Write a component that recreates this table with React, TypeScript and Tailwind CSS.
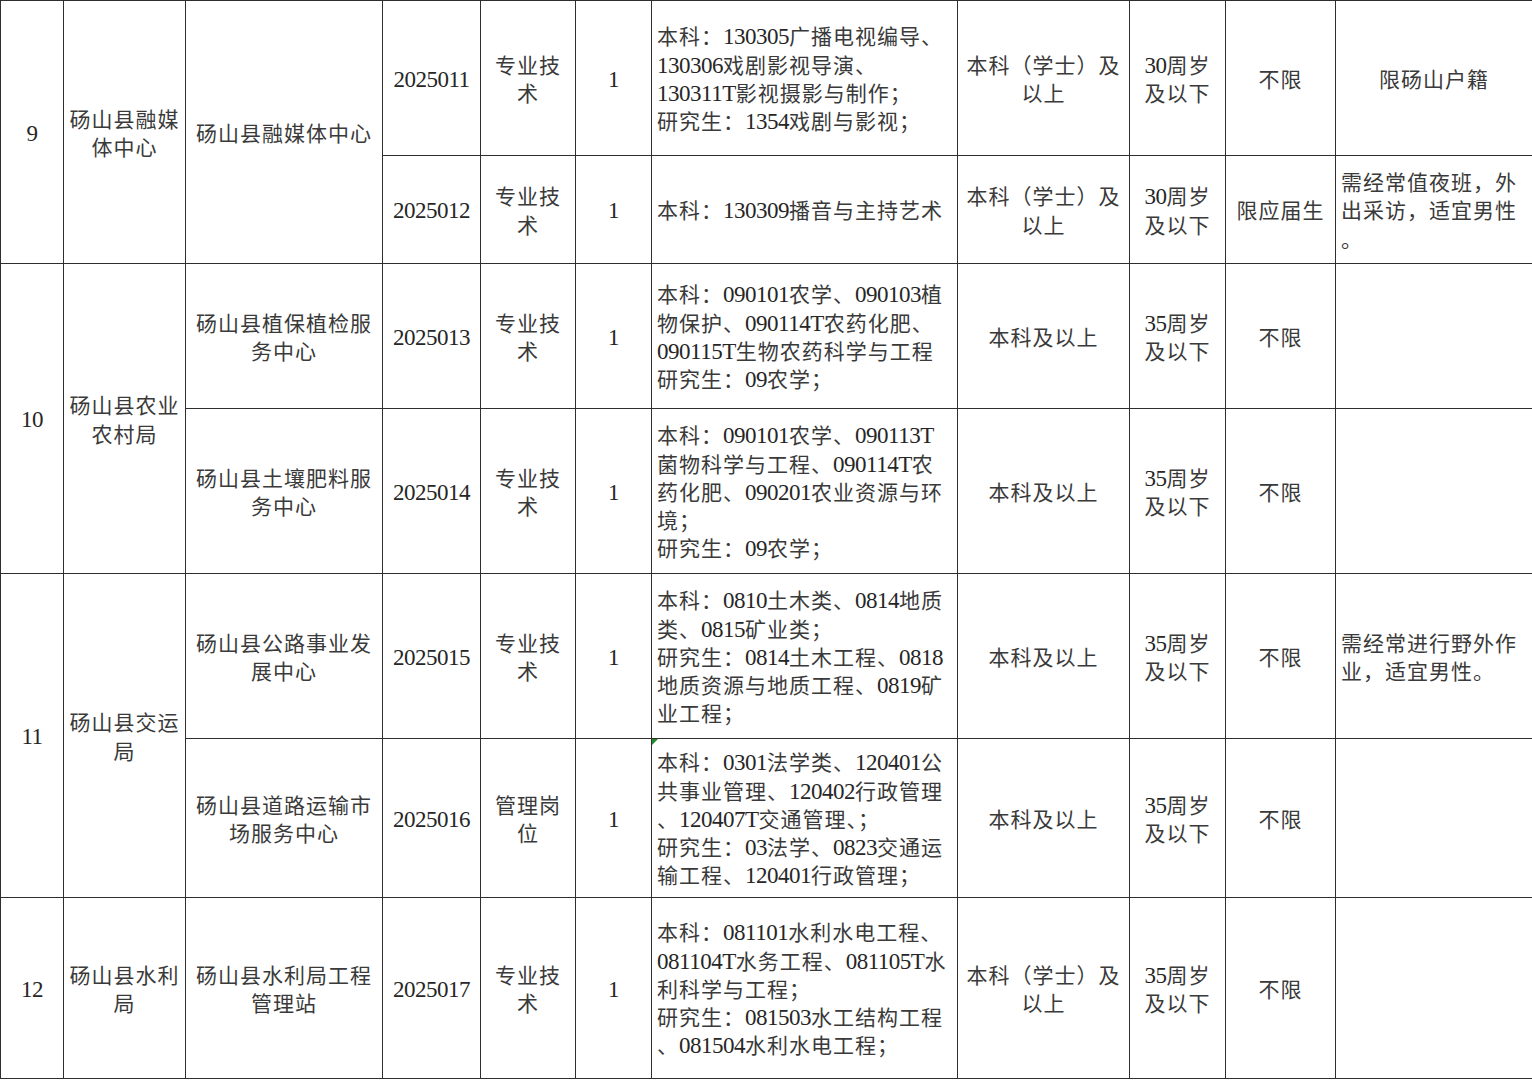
import type { ReactNode } from "react";

// one physical line per entry, the reference wraps at fixed spots
type Lines = string[];

interface Post {
  agency: Lines;
  code: string;
  kind: Lines;
  count: string;
  major: Lines;
  degree: Lines;
  age: Lines;
  other: Lines;
  remark: Lines;
  remarkAlign?: "left" | "center";
  height: string; // tr height class
  flag?: boolean; // green corner mark in the major cell
}

interface Group {
  no: string;
  dept: Lines;
  posts: Post[];
}

const groups: Group[] = [
  {
    no: "9",
    dept: ["砀山县融媒", "体中心"],
    posts: [
      {
        agency: ["砀山县融媒体中心"],
        code: "2025011",
        kind: ["专业技", "术"],
        count: "1",
        major: ["本科：130305广播电视编导、", "130306戏剧影视导演、", "130311T影视摄影与制作；", "研究生：1354戏剧与影视；"],
        degree: ["本科（学士）及", "以上"],
        age: ["30周岁", "及以下"],
        other: ["不限"],
        remark: ["限砀山户籍"],
        height: "h-[155px]",
      },
      {
        agency: [],
        code: "2025012",
        kind: ["专业技", "术"],
        count: "1",
        major: ["本科：130309播音与主持艺术"],
        degree: ["本科（学士）及", "以上"],
        age: ["30周岁", "及以下"],
        other: ["限应届生"],
        remark: ["需经常值夜班，外", "出采访，适宜男性", "。"],
        remarkAlign: "left",
        height: "h-[108px]",
      },
    ],
  },
  {
    no: "10",
    dept: ["砀山县农业", "农村局"],
    posts: [
      {
        agency: ["砀山县植保植检服", "务中心"],
        code: "2025013",
        kind: ["专业技", "术"],
        count: "1",
        major: ["本科：090101农学、090103植", "物保护、090114T农药化肥、", "090115T生物农药科学与工程", "研究生：09农学；"],
        degree: ["本科及以上"],
        age: ["35周岁", "及以下"],
        other: ["不限"],
        remark: [],
        height: "h-[145px]",
      },
      {
        agency: ["砀山县土壤肥料服", "务中心"],
        code: "2025014",
        kind: ["专业技", "术"],
        count: "1",
        major: ["本科：090101农学、090113T", "菌物科学与工程、090114T农", "药化肥、090201农业资源与环", "境；", "研究生：09农学；"],
        degree: ["本科及以上"],
        age: ["35周岁", "及以下"],
        other: ["不限"],
        remark: [],
        height: "h-[165px]",
      },
    ],
  },
  {
    no: "11",
    dept: ["砀山县交运", "局"],
    posts: [
      {
        agency: ["砀山县公路事业发", "展中心"],
        code: "2025015",
        kind: ["专业技", "术"],
        count: "1",
        major: ["本科：0810土木类、0814地质", "类、0815矿业类；", "研究生：0814土木工程、0818", "地质资源与地质工程、0819矿", "业工程；"],
        degree: ["本科及以上"],
        age: ["35周岁", "及以下"],
        other: ["不限"],
        remark: ["需经常进行野外作", "业，适宜男性。"],
        remarkAlign: "left",
        height: "h-[165px]",
      },
      {
        agency: ["砀山县道路运输市", "场服务中心"],
        code: "2025016",
        kind: ["管理岗", "位"],
        count: "1",
        major: ["本科：0301法学类、120401公", "共事业管理、120402行政管理", "、120407T交通管理、；", "研究生：03法学、0823交通运", "输工程、120401行政管理；"],
        degree: ["本科及以上"],
        age: ["35周岁", "及以下"],
        other: ["不限"],
        remark: [],
        height: "h-[159px]",
        flag: true,
      },
    ],
  },
  {
    no: "12",
    dept: ["砀山县水利", "局"],
    posts: [
      {
        agency: ["砀山县水利局工程", "管理站"],
        code: "2025017",
        kind: ["专业技", "术"],
        count: "1",
        major: ["本科：081101水利水电工程、", "081104T水务工程、081105T水", "利科学与工程；", "研究生：081503水工结构工程", "、081504水利水电工程；"],
        degree: ["本科（学士）及", "以上"],
        age: ["35周岁", "及以下"],
        other: ["不限"],
        remark: [],
        height: "h-[181px]",
      },
    ],
  },
];

// latin runs (codes, ages) get a taller, tighter serif so they sit like the song-style digits
function Rich({ text }: { text: string }) {
  const parts = text.split(/([0-9A-Z]+)/);
  return (
    <>
      {parts.map((p, i) =>
        /^[0-9A-Z]+$/.test(p) ? (
          <span key={i} className="text-[23px] leading-none tracking-[-0.5px] text-[#262626]">{p}</span>
        ) : (
          p
        ),
      )}
    </>
  );
}

function Text({ lines }: { lines: Lines }) {
  return (
    <>
      {lines.map((l, i) => (
        <div key={i} className="whitespace-nowrap">
          <Rich text={l} />
        </div>
      ))}
    </>
  );
}

function Cell({ children, align = "center", rowSpan, className = "" }: { children?: ReactNode; align?: "left" | "center"; rowSpan?: number; className?: string }) {
  return (
    <td
      rowSpan={rowSpan}
      className={`border border-[#2e2e2e] px-[5px] pt-[4px] pb-0 align-middle ${align === "left" ? "text-left" : "text-center"} ${className}`}
    >
      {children}
    </td>
  );
}

export default function App() {
  return (
    <div className="w-[1532px] h-[1080px] bg-white overflow-hidden">
      <table className="table-fixed border-collapse w-[1532px] text-[21px] tracking-[1px] leading-[28.3px] text-[#3a3a3a] font-['Liberation_Serif','Noto_Sans_CJK_SC',serif]">
        <colgroup>
          <col className="w-[63px]" />
          <col className="w-[122px]" />
          <col className="w-[197px]" />
          <col className="w-[98px]" />
          <col className="w-[95px]" />
          <col className="w-[76px]" />
          <col className="w-[306px]" />
          <col className="w-[172px]" />
          <col className="w-[96px]" />
          <col className="w-[110px]" />
          <col className="w-[197px]" />
        </colgroup>
        <tbody>
          {groups.map((g) =>
            g.posts.map((p, i) => (
              <tr key={p.code} className={p.height}>
                {i === 0 && (
                  <>
                    <Cell rowSpan={g.posts.length}><Text lines={[g.no]} /></Cell>
                    <Cell rowSpan={g.posts.length}><Text lines={g.dept} /></Cell>
                  </>
                )}
                {/* the media centre spans both of its posts */}
                {g.no === "9" ? (
                  i === 0 && <Cell rowSpan={2}><Text lines={p.agency} /></Cell>
                ) : (
                  <Cell><Text lines={p.agency} /></Cell>
                )}
                <Cell><Text lines={[p.code]} /></Cell>
                <Cell><Text lines={p.kind} /></Cell>
                <Cell><Text lines={[p.count]} /></Cell>
                <Cell align="left" className="relative">
                  {p.flag && (
                    <span className="absolute left-0 top-0 w-0 h-0 border-t-[6px] border-t-[#1f8a2e] border-r-[6px] border-r-transparent" />
                  )}
                  <Text lines={p.major} />
                </Cell>
                <Cell><Text lines={p.degree} /></Cell>
                <Cell><Text lines={p.age} /></Cell>
                <Cell><Text lines={p.other} /></Cell>
                <Cell align={p.remarkAlign ?? "center"}><Text lines={p.remark} /></Cell>
              </tr>
            )),
          )}
        </tbody>
      </table>
    </div>
  );
}
